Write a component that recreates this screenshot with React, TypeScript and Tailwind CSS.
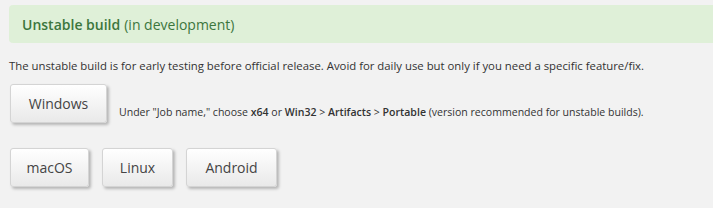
const font = { fontFamily: '"Open Sans", "Liberation Sans", sans-serif' };

function DownloadButton({ label, className = '' }: { label: string; className?: string }) {
  return (
    <button
      type="button"
      className={[
        'flex h-[39px] items-center justify-center rounded-[3px] border border-[#d4d4d4]',
        'bg-gradient-to-b from-white to-[#e9e9e9] text-[14px] text-[#444]',
        'shadow-[2px_2px_3px_rgba(0,0,0,0.25)]',
        className,
      ].join(' ')}
    >
      {label}
    </button>
  );
}

export default function App() {
  return (
    <div className="h-[208px] w-[713px] overflow-hidden bg-[#f2f2f2] pt-[5px] pl-[9px]" style={font}>
      {/* ── Section header ───────────────────────────────────────────── */}
      <div className="flex h-[38px] items-center rounded-l-[4px] bg-[#dff0d8] pl-[13px] text-[14px] text-[#3c763d]">
        <span className="font-semibold">Unstable build</span>
        <span className="ml-[4px]">(in development)</span>
      </div>

      <p className="mt-[15px] text-[11.35px] leading-[15px] text-[#333]">
        The unstable build is for early testing before official release. Avoid for daily use but only if you need a specific feature/fix.
      </p>

      {/* ── Windows + instructions ───────────────────────────────────── */}
      <div className="mt-[11px] flex items-start">
        <DownloadButton label="Windows" className="ml-px w-[97px]" />
        <span className="mt-[21px] ml-[12px] text-[10.55px] text-[#333]">
          Under "Job name," choose <b className="font-semibold">x64</b> or <b className="font-semibold">Win32</b> &gt;{' '}
          <b className="font-semibold">Artifacts</b> &gt; <b className="font-semibold">Portable</b> (version recommended for unstable builds).
        </span>
      </div>

      {/* ── Other platforms ──────────────────────────────────────────── */}
      <div className="mt-[25px] flex gap-[13px]">
        <DownloadButton label="macOS" className="ml-px w-[79px]" />
        <DownloadButton label="Linux" className="w-[71px]" />
        <DownloadButton label="Android" className="w-[91px]" />
      </div>
    </div>
  );
}
